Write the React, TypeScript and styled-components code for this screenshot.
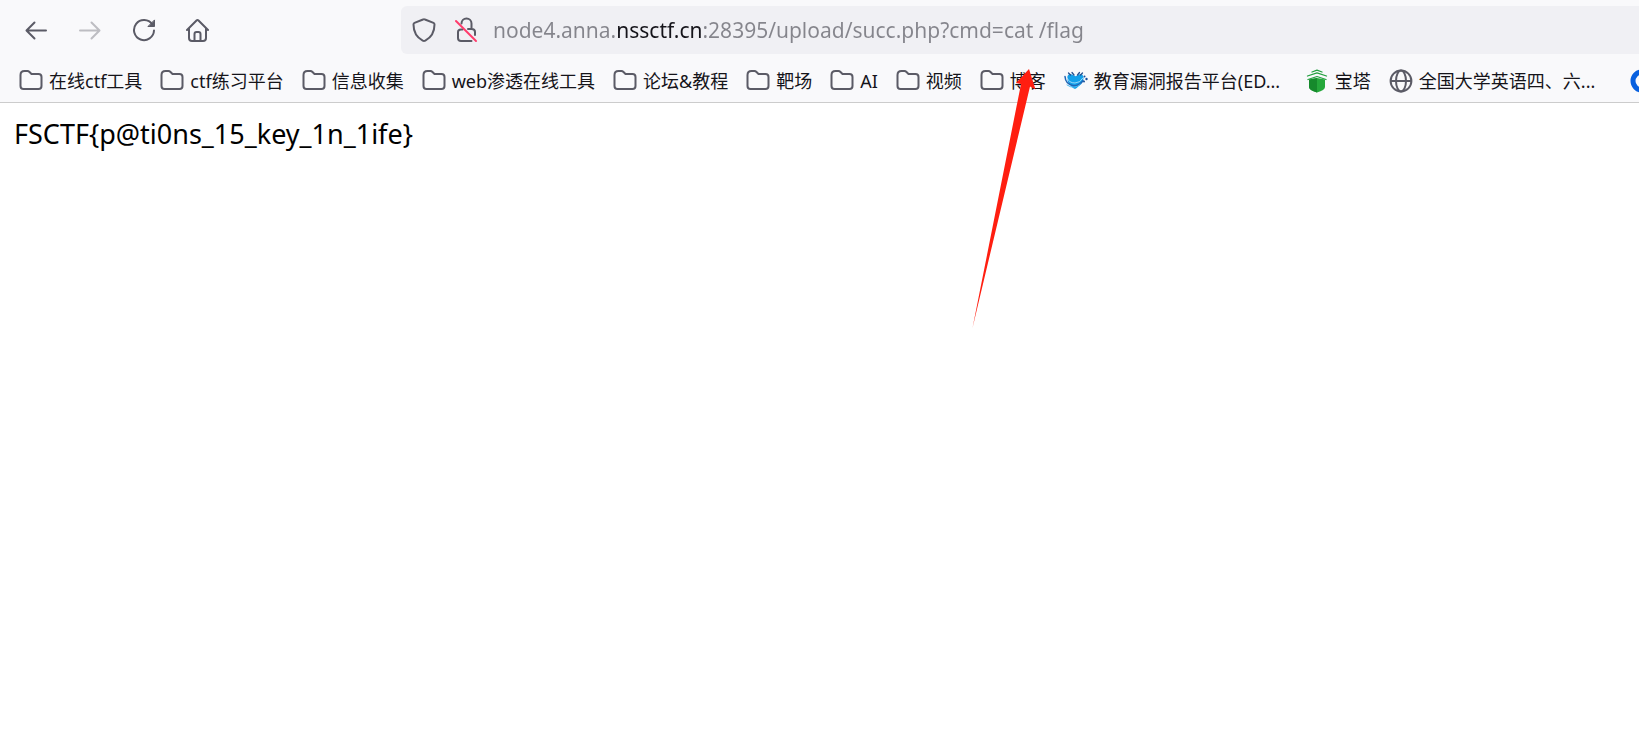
import React from "react";
import styled, { createGlobalStyle } from "styled-components";

const uiFont = '"Noto Sans", "Noto Sans CJK SC", sans-serif';

const GlobalStyle = createGlobalStyle`
  * { box-sizing: border-box; }
  body { margin: 0; background: #ffffff; overflow-x: hidden; font-family: ${uiFont}; }
`;

const Browser = styled.div`
  position: relative;
  min-height: 100vh;
  overflow: hidden;
`;

const Chrome = styled.header`
  background: #f9f9fb;
  border-bottom: 1px solid #cccccc;
`;

const Toolbar = styled.div`
  display: flex;
  align-items: center;
  height: 60px;
  padding-left: 9px;
`;

const NavButtons = styled.nav`
  display: flex;
  margin-right: 176px;
`;

const NavButton = styled.button`
  display: flex;
  align-items: center;
  justify-content: center;
  width: 54px;
  height: 48px;
  padding: 0;
  border: 0;
  background: none;
  color: #5b5b66;

  &:disabled { color: #bdbdc2; }
`;

const AddressBar = styled.form`
  display: flex;
  flex: 1;
  align-items: center;
  height: 48px;
  margin-right: -8px;
  padding-left: 10px;
  border-radius: 6px;
  background: #f0f0f4;
`;

const AddressButton = styled(NavButton)`
  flex: none;
  width: 26px;
  height: 32px;
  margin-right: 15px;
`;

/* The host name is darker than the rest of the address. */
const AddressInput = styled.input`
  flex: 1;
  min-width: 0;
  height: 40px;
  padding: 0;
  border: 0;
  outline: 0;
  font: 21px/32px ${uiFont};
  color: transparent;
  background: linear-gradient(90deg, #85858c 122px, #15141a 122px 208px, #85858c 208px);
  -webkit-background-clip: text;
  background-clip: text;
`;

const Bookmarks = styled.ul`
  display: flex;
  align-items: center;
  gap: 18px;
  height: 42px;
  margin: 0;
  padding: 0 0 0 19px;
  list-style: none;
`;

const Bookmark = styled.li<{ $full?: boolean }>`
  flex: none;
  width: ${({ $full }) => ($full ? "223px" : "auto")};
`;

const BookmarkLink = styled.a`
  display: flex;
  align-items: center;
  gap: 6px;
  color: #15141a;
  font-size: 18px;
  line-height: 24px;
  text-decoration: none;
  white-space: nowrap;
`;

const Icon = styled.svg`
  display: block;
  flex: none;
  fill: none;
  stroke: currentColor;
  stroke-width: 2;
  stroke-linecap: round;
  stroke-linejoin: round;
`;

const BookmarkIcon = styled(Icon)`
  color: #5b5b66;
`;

const Content = styled.main`
  padding: 12px 14px;
  color: #000000;
  font-size: 27px;
  line-height: 38px;
`;

const Pointer = styled.svg`
  position: absolute;
  top: 68px;
  left: 972px;
  pointer-events: none;
`;

type Kind = "folder" | "heart" | "tower" | "globe" | "ring";

function Favicon({ kind }: { kind: Kind }) {
  switch (kind) {
    case "folder":
      return (
        <BookmarkIcon width="24" height="24" viewBox="0 0 24 24" aria-hidden>
          <path d="M1.500 6q0-4 4-4h3q1 0 2 1l2 2h7q3 0 3 3v9q0 3-3 3h-15q-3 0-3-3z" />
        </BookmarkIcon>
      );
    case "heart":
      return (
        <BookmarkIcon width="24" height="24" viewBox="0 0 24 24" aria-hidden>
          <path d="M3.500 7Q5 4 8 5.500l3.500 1.700L15 5.500Q18.500 4 19.500 8q.5 4-3.500 8-3 3-5 4-2.500-1-5-4Q2.500 12 3.500 7z" fill="#12a0ea" stroke="none" />
          <path d="M4.500 4l2 2M8 3.500l2 2.500M15.500 3.500l-2 2.500M18.500 4l-2 2" stroke="#28508f" strokeWidth="1.300" />
          <path d="M1 7.500q.5 8 8.500 9.200 6 0 9.500-5" stroke="#2065b5" strokeWidth="1.500" />
          <path d="M3 9q2 5 8 5 5 0 8-5" stroke="#d5effc" strokeWidth="0.700" />
          <path d="M3 16q7 5 14-1" stroke="#4ab7ef" strokeWidth="1" />
          <circle cx="20" cy="12.500" r="1" fill="#174f9c" stroke="none" />
          <circle cx="22.500" cy="10" r="1.200" fill="#174f9c" stroke="none" />
          <circle cx="20.500" cy="7.500" r="1" fill="#174f9c" stroke="none" />
        </BookmarkIcon>
      );
    case "tower":
      return (
        <BookmarkIcon width="24" height="24" viewBox="0 0 24 24" aria-hidden>
          <path d="M4 10.500L12 9l8 1.500V18q0 3-8 5.500-8-2.500-8-5.500z" fill="#25a83b" stroke="none" />
          <path d="M4 10.500L12 9v14.500q-8-2.500-8-5.500z" fill="#168a2c" stroke="none" />
          <path d="M3 9.300l9-3.500 9 3.500" stroke="#f9f9fb" strokeWidth="1.500" />
          <path d="M7 3l5-1.800L17 3M2.500 7L12 3.800 21.500 7M3 10.500l9-3 9 3" stroke="#25a040" strokeWidth="1.300" />
        </BookmarkIcon>
      );
    case "globe":
      return (
        <BookmarkIcon width="24" height="24" viewBox="0 0 24 24" aria-hidden>
          <circle cx="12" cy="12" r="10.400" />
          <ellipse cx="12" cy="12" rx="5" ry="10.400" />
          <path d="M2 12h20" />
        </BookmarkIcon>
      );
    case "ring":
      return (
        <Icon width="24" height="24" viewBox="0 0 24 24" aria-hidden>
          <circle cx="12" cy="12" r="9" stroke="#0860df" strokeWidth="5" />
        </Icon>
      );
  }
}

const bookmarks: { label: string; kind: Kind; full?: boolean }[] = [
  { label: "在线ctf工具", kind: "folder" },
  { label: "ctf练习平台", kind: "folder" },
  { label: "信息收集", kind: "folder" },
  { label: "web渗透在线工具", kind: "folder" },
  { label: "论坛&教程", kind: "folder" },
  { label: "靶场", kind: "folder" },
  { label: "AI", kind: "folder" },
  { label: "视频", kind: "folder" },
  { label: "博客", kind: "folder" },
  { label: "教育漏洞报告平台(ED...", kind: "heart", full: true },
  { label: "宝塔", kind: "tower" },
  { label: "全国大学英语四、六...", kind: "globe", full: true },
  { label: "", kind: "ring" },
];

export default function App() {
  return (
    <Browser>
      <GlobalStyle />
      <Chrome>
        <Toolbar>
          <NavButtons aria-label="Navigation">
            <NavButton type="button" aria-label="Back">
              <Icon width="24" height="24" viewBox="0 0 24 24">
                <path d="M22 12.500H3M10.500 4.500L2.500 12.500l8 8" />
              </Icon>
            </NavButton>
            <NavButton type="button" aria-label="Forward" disabled>
              <Icon width="24" height="24" viewBox="0 0 24 24">
                <path d="M2 12.500h19M13.500 4.500l8 8-8 8" />
              </Icon>
            </NavButton>
            <NavButton type="button" aria-label="Reload">
              <Icon width="24" height="24" viewBox="0 0 24 24">
                <path d="M20.300 6.500A10 10 0 1 0 22 12.500" />
                <path d="M22.500 2.300v6.200h-6.200z" fill="currentColor" strokeWidth="1" />
              </Icon>
            </NavButton>
            <NavButton type="button" aria-label="Home">
              <Icon width="24" height="24" viewBox="0 0 24 24">
                <path d="M1 12L10.500 2.500q1-1 2 0L22 12M3 10.500V20q0 3 3 3h11q3 0 3-3v-9.500" />
                <path d="M8.500 23v-7q0-2 2-2h2q2 0 2 2v7" />
              </Icon>
            </NavButton>
          </NavButtons>
          <AddressBar onSubmit={(event) => event.preventDefault()}>
            <AddressButton type="button" aria-label="Tracking protection">
              <Icon width="26" height="26" viewBox="0 0 26 26">
                <path d="M12 2.500q1-.6 2 0l8.500 3.400q1 .4 1 1.600 0 11-9.200 16.200-1.300.7-2.600 0Q2.500 18.500 2.500 7.500q0-1.200 1-1.600z" />
              </Icon>
            </AddressButton>
            <AddressButton type="button" aria-label="Connection not secure">
              <Icon width="26" height="26" viewBox="0 0 26 26">
                <path d="M9.500 6.500a5 5 0 0 1 10 0V12q3.500 0 3.500 3v3M10.500 12.500H9q-3 0-3 2.500v6q0 3 3 3h10.500M16 12h3.500" />
                <path d="M4 4l20 20" stroke="#ff3b6b" />
              </Icon>
            </AddressButton>
            <AddressInput
              type="text"
              aria-label="Address"
              spellCheck={false}
              defaultValue="node4.anna.nssctf.cn:28395/upload/succ.php?cmd=cat /flag"
            />
          </AddressBar>
        </Toolbar>
        <Bookmarks aria-label="Bookmarks">
          {bookmarks.map(({ label, kind, full }) => (
            <Bookmark key={kind + label} $full={full}>
              <BookmarkLink href="#" aria-label={label || "Bookmark"}>
                <Favicon kind={kind} />
                {label}
              </BookmarkLink>
            </Bookmark>
          ))}
        </Bookmarks>
      </Chrome>
      <Content>FSCTF{"{"}p@ti0ns_15_key_1n_1ife{"}"}</Content>
      <Pointer width="66" height="262" viewBox="0 0 66 262" aria-hidden>
        <path d="M57 1L63.500 21.500 58 18.500 .5 260 49 16 44 15z" fill="#ff1e10" />
      </Pointer>
    </Browser>
  );
}
